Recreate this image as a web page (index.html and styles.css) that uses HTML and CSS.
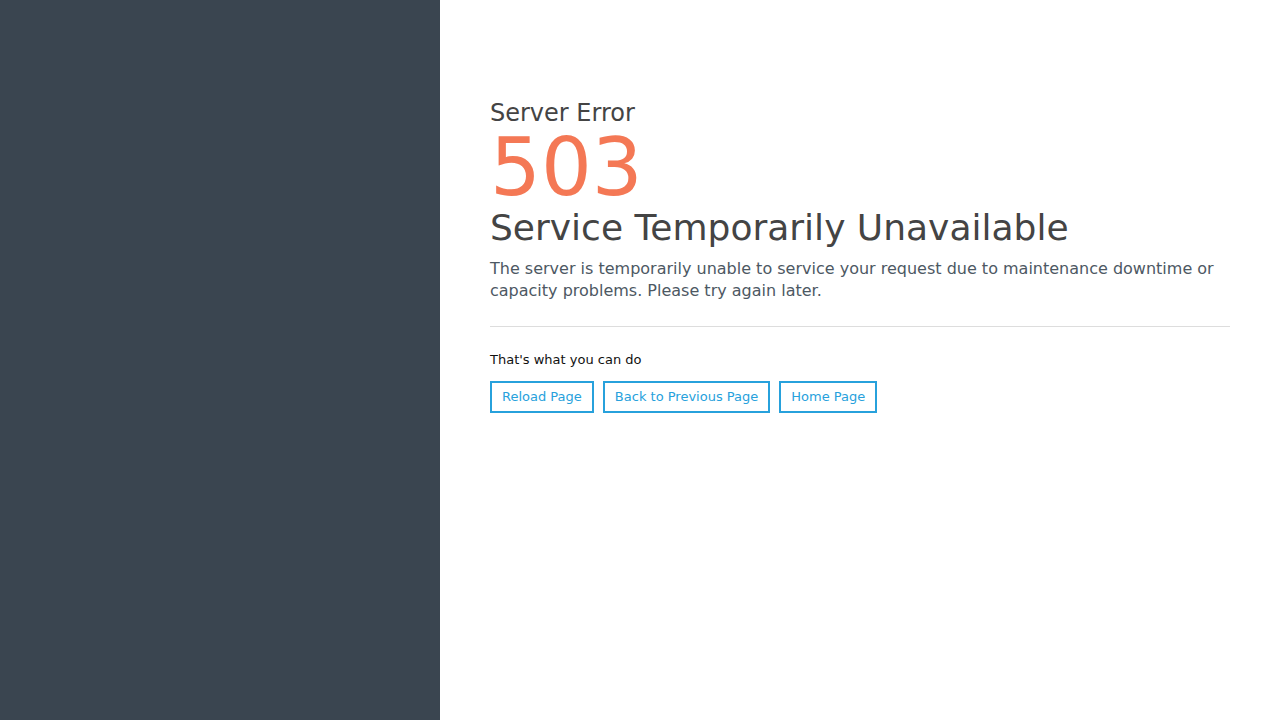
FILE: index.html
```html
<!DOCTYPE html>
<html lang="en">
<head>
<meta charset="utf-8">
<title>503 Service Temporarily Unavailable</title>
<link rel="stylesheet" href="styles.css">
</head>
<body>
<div class="layout">
  <aside class="side"></aside>
  <main class="main">
    <div class="content">
      <h2 class="label">Server Error</h2>
      <h1 class="code">503</h1>
      <h3 class="title">Service Temporarily Unavailable</h3>
      <p class="desc">The server is temporarily unable to service your request due to maintenance downtime or capacity problems. Please try again later.</p>
      <hr class="rule">
      <p class="hint">That's what you can do</p>
      <div class="actions">
        <a class="btn" href="#">Reload Page</a>
        <a class="btn" href="#">Back to Previous Page</a>
        <a class="btn" href="#">Home Page</a>
      </div>
    </div>
  </main>
</div>
</body>
</html>
```

FILE: styles.css
```css
html, body {
  margin: 0;
  padding: 0;
  height: 100%;
}
body {
  font-family: "DejaVu Sans", sans-serif;
  background: #fff;
}
.layout {
  display: flex;
  height: 100vh;
}
.side {
  width: 440px;
  flex-shrink: 0;
  background: #3a4550;
}
.main {
  flex: 1;
  padding: 0 50px;
}
.content {
  padding-top: 98px;
}
.label {
  margin: 0;
  font-size: 24px;
  font-weight: normal;
  line-height: 30px;
  color: #444;
}
.code {
  margin: 0;
  font-size: 80px;
  font-weight: normal;
  line-height: 80px;
  color: #f47855;
}
.title {
  margin: 0;
  font-size: 36px;
  font-weight: normal;
  line-height: 40px;
  color: #444;
}
.desc {
  margin: 10px 0 0;
  font-size: 16px;
  line-height: 22px;
  color: #4d5863;
}
.rule {
  margin: 24px 0 0;
  border: 0;
  border-top: 1px solid #ddd;
}
.hint {
  margin: 24px 0 0;
  font-size: 13px;
  line-height: 18px;
  color: #111;
}
.actions {
  display: flex;
  gap: 9px;
  margin-top: 12px;
}
.btn {
  display: inline-block;
  border: 2px solid #27a1dc;
  padding: 0 10px;
  height: 28px;
  line-height: 28px;
  font-size: 13px;
  color: #27a1dc;
  text-decoration: none;
}
```
